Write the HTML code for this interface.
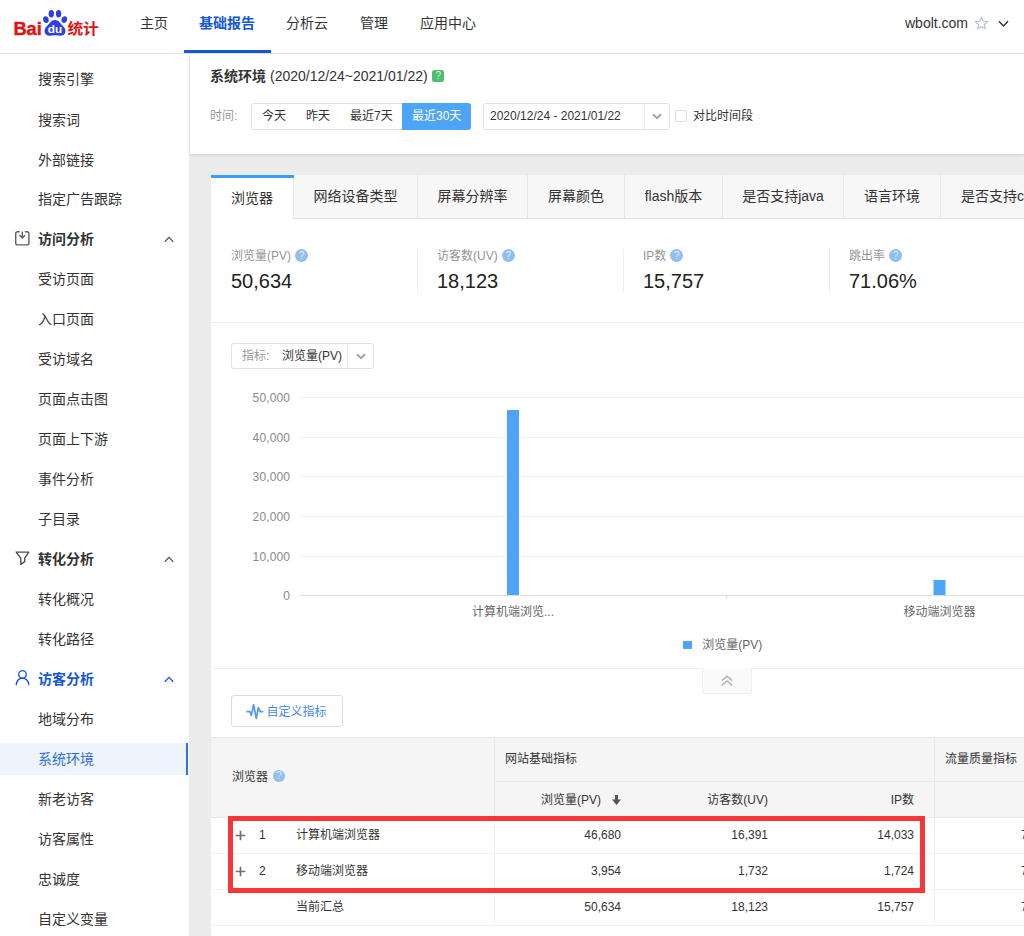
<!DOCTYPE html>
<html lang="zh-CN">
<head>
<meta charset="utf-8">
<title>百度统计 - 系统环境</title>
<style>
*{box-sizing:border-box;margin:0;padding:0}
html,body{width:1024px;height:936px;overflow:hidden;background:#ececec}
body{font-family:"Liberation Sans","Noto Sans CJK SC",sans-serif;font-size:12px;color:#333;position:relative}
.abs{position:absolute}
/* header */
#hdr{position:absolute;left:0;top:0;width:1024px;height:54px;background:#fff;border-bottom:1px solid #e1e5e9}
#hdr .nav{position:absolute;top:0;height:53px;line-height:47px;font-size:14px;color:#333;white-space:nowrap}
#hdr .nav.on{color:#1557d6;font-weight:bold}
#hdr .ul{position:absolute;left:184px;top:50px;width:87px;height:3px;background:#1557d6}
/* sidebar */
#side{position:absolute;left:0;top:54px;width:189px;height:882px;background:#fff}
#side .it{position:absolute;left:0;width:188px;height:40px;line-height:40px;padding-left:38px;font-size:14px;color:#333;white-space:nowrap}
#side .it.g{font-weight:bold}
#side .it.b{color:#1557d6}
#side .it.on{color:#2f6de0;background:linear-gradient(#eef4fe,#eef4fe) 0 4px/188px 32px no-repeat}
#side .it.on:after{content:"";position:absolute;right:0;top:4px;width:2px;height:32px;background:#3271dc}
/* main */
#top{position:absolute;left:189px;top:54px;width:835px;height:100px;background:#fff;border-left:1px solid #e6e8eb;box-shadow:0 1px 3px rgba(0,0,0,.12)}
#card{position:absolute;left:211px;top:175px;width:813px;height:761px;background:#fff}

/* top panel */
#top .ttl{position:absolute;left:20px;top:13px;height:18px;line-height:18px;font-size:14px;color:#333;white-space:nowrap}
#top .ttl b{font-weight:bold}
#top .qg{position:absolute;left:242.4px;top:16px;width:12px;height:12px;border-radius:2.5px;background:#4cbe6d;color:rgba(255,255,255,.8);font-size:10px;line-height:12px;text-align:center;font-weight:normal}
#top .lbl{position:absolute;left:20px;top:49px;height:26px;line-height:26px;color:#999;font-size:12px}
#top .grp{position:absolute;left:61px;top:49px;height:27px;width:220px;border:1px solid #e2e2e2;border-radius:3px;background:#fff}
#top .grp span{position:absolute;top:-1px;height:27px;line-height:26px;font-size:12px;color:#333;white-space:nowrap}
#top .grp span.on{background:#4da4f8;color:#fff;padding:0 10px;border-radius:0 3px 3px 0}
#top .date{position:absolute;left:293px;top:49px;width:187px;height:27px;border:1px solid #e2e2e2;border-radius:3px;line-height:25px;padding-left:6px;font-size:12px;color:#333;white-space:nowrap}
#top .date i{position:absolute;left:160px;top:0;width:1px;height:25px;background:#e8e8e8}
#top .cb{position:absolute;left:485px;top:56px;width:12px;height:12px;border:1px solid #dcdcdc;border-radius:2px;background:#fff}
#top .cbl{position:absolute;left:503px;top:49px;height:26px;line-height:26px;font-size:12px;color:#333;white-space:nowrap}

/* card */
#tabs{position:absolute;left:0;top:0;width:813px;height:44px;background:#f7f7f7;box-shadow:inset 0 -1px 0 #e6e6e6;overflow:hidden;white-space:nowrap}
#tabs .t{position:absolute;top:0;height:43px;line-height:43px;font-size:14px;color:#333;border-right:1px solid #e6e6e6;text-align:center;white-space:nowrap}
#tabs .t.on{background:#fff;height:44px;line-height:46px;border-left:0}
#tabs .t.on:before{content:"";position:absolute;left:0;top:0;width:83px;height:3px;background:#3f9cf6}
.m{position:absolute;top:72px;width:206px;height:50px}
.m .k{position:absolute;left:20px;top:1px;height:16px;line-height:16px;font-size:12px;color:#949494;white-space:nowrap}
.m .v{position:absolute;left:20px;top:22px;height:24px;line-height:24px;font-size:20px;color:#222;white-space:nowrap}
.m .d{position:absolute;left:0;top:2px;width:1px;height:44px;background:#eee}
.hq{display:inline-block;width:12px;height:12px;border-radius:7px;background:#92bdf1;color:rgba(255,255,255,.8);font-size:10px;line-height:12px;text-align:center;font-weight:normal;vertical-align:top;margin:2px 0 0 5px}
.m .hq{width:13px;height:13px;line-height:13px;margin:1px 0 0 4px}
.hl{position:absolute;left:0;width:813px;height:1px;background:#eee}

/* chart */
#sel{position:absolute;left:20px;top:168px;width:143px;height:26px;border:1px solid #e2e2e2;border-radius:3px;background:#fff;font-size:12px;line-height:24px;white-space:nowrap}
#sel .a{position:absolute;left:10px;top:0;color:#999;font-size:12px}
#sel .b{position:absolute;left:50px;top:0;color:#333}
#sel i{position:absolute;left:115px;top:0;width:1px;height:24px;background:#e6e6e6}
#chart{position:absolute;left:0;top:200px}
#chart text{font-family:"Liberation Sans","Noto Sans CJK SC",sans-serif;font-size:12px}
#fold{position:absolute;left:491px;top:493px;width:50px;height:26px;background:#fafafa;border:1px solid #f0f0f0;border-top:0;border-radius:0 0 3px 3px}
#cust{position:absolute;left:20px;top:520px;width:112px;height:32px;border:1px solid #ddd;border-radius:3px;background:#fff}
#cust span{position:absolute;left:34.6px;top:1px;line-height:31px;font-size:12px;color:#4189e8;white-space:nowrap}

/* table */
#tb{position:absolute;left:0;top:562px;width:813px;height:199px;font-size:12px;color:#333}
#tb .hd{position:absolute;left:0;top:0;width:813px;height:81px;background:#f5f5f5;border-top:1px solid #e8e8e8;border-bottom:1px solid #e8e8e8}
#tb .vl{position:absolute;width:1px;background:#e8e8e8}
#tb .x{position:absolute;height:20px;line-height:20px;white-space:nowrap}
#tb .r{text-align:right}
#tb .rl{position:absolute;left:0;width:813px;height:1px;background:#f1f1f1}
#red{position:absolute;left:17px;top:641px;width:697px;height:76.5px;border:5px solid #f83636}

#logo{position:absolute;left:0;top:0}
#logo text{font-family:"Liberation Sans","Noto Sans CJK SC",sans-serif;font-weight:bold}
.sic{position:absolute;left:14px}
.chev{position:absolute;left:164px}
</style>
</head>
<body>
<div id="hdr">
  <svg id="logo" width="110" height="53" viewBox="0 0 110 53">
    <text x="13.4" y="35.3" font-size="18.6" fill="#e01414" stroke="#e01414" stroke-width="0.45" textLength="28.4" lengthAdjust="spacingAndGlyphs">Bai</text>
    <g fill="#3040e0">
      <ellipse cx="45.9" cy="19.7" rx="2.8" ry="3.4" transform="rotate(-12 45.9 19.7)"/>
      <ellipse cx="51.3" cy="13.8" rx="2.7" ry="3.7"/>
      <ellipse cx="58.6" cy="13.8" rx="2.7" ry="3.7"/>
      <ellipse cx="64.3" cy="19.7" rx="2.8" ry="3.4" transform="rotate(12 64.3 19.7)"/>
      <path d="M55 20 C58.5 20 60 23 62.5 25.5 C65 28 66 30 65.3 32.6 C64.6 35.4 62 36 59.5 35.8 C57.5 35.6 56.5 35.3 55 35.3 C53.5 35.3 52.5 35.6 50.5 35.8 C48 36 45.4 35.4 44.7 32.6 C44 30 45 28 47.5 25.5 C50 23 51.5 20 55 20 Z"/>
    </g>
    <text x="47.8" y="33.2" font-size="11.4" fill="#fff" textLength="14.4" lengthAdjust="spacingAndGlyphs">du</text>
    <text x="67.4" y="34.2" font-size="14.6" fill="#e01414" textLength="31.4" lengthAdjust="spacingAndGlyphs">统计</text>
  </svg>
  <div class="nav" style="left:140px">主页</div>
  <div class="nav on" style="left:199px">基础报告</div>
  <div class="nav" style="left:286px">分析云</div>
  <div class="nav" style="left:360px">管理</div>
  <div class="nav" style="left:420px">应用中心</div>
  <div class="ul"></div>
  <div class="nav" style="left:905px">wbolt.com</div>
  <svg style="position:absolute;left:974px;top:16px" width="15" height="14" viewBox="0 0 15 14"><path d="M7.5 1.2 L9.3 5.2 L13.7 5.6 L10.4 8.5 L11.4 12.8 L7.5 10.5 L3.6 12.8 L4.6 8.5 L1.3 5.6 L5.7 5.2 Z" fill="none" stroke="#b4bfdd" stroke-width="1.15" stroke-linejoin="round"/></svg>
  <svg style="position:absolute;left:998px;top:20px" width="11" height="8" viewBox="0 0 11 8"><path d="M1 1.3 L5.5 6 L10 1.3" fill="none" stroke="#333" stroke-width="1.5"/></svg>
</div>
<div id="side">
  <svg class="sic" style="top:176px" width="17" height="17" viewBox="0 0 17 17"><path d="M5.2 1.7 H3.6 Q1.7 1.7 1.7 3.6 V13 Q1.7 14.9 3.6 14.9 H13 Q14.9 14.9 14.9 13 V3.6 Q14.9 1.7 13 1.7 H11.4 M8.3 1.9 V7.6 M5.9 5.5 L8.3 7.9 L10.7 5.5" fill="none" stroke="#5b606b" stroke-width="1.4" stroke-linecap="round" stroke-linejoin="round"/></svg>
  <svg class="sic" style="top:496px" width="17" height="17" viewBox="0 0 17 17"><path d="M2.2 2.1 H14.8 L10.7 8.2 V11.7 L6.8 14.4 V8.2 Z" fill="none" stroke="#4a4f5a" stroke-width="1.4" stroke-linejoin="round"/></svg>
  <svg class="sic" style="top:614px" width="17" height="19" viewBox="0 0 17 19"><circle cx="8.5" cy="6.4" r="3.75" fill="none" stroke="#1557d6" stroke-width="1.4"/><path d="M2.3 16.6 A6.2 6.5 0 0 1 14.7 16.6" fill="none" stroke="#1557d6" stroke-width="1.4" stroke-linecap="round"/></svg>
  <svg class="chev" style="top:182px" width="10" height="7" viewBox="0 0 10 7"><path d="M0.8 5.8 L5 1.4 L9.2 5.8" fill="none" stroke="#555" stroke-width="1.3"/></svg>
  <svg class="chev" style="top:502px" width="10" height="7" viewBox="0 0 10 7"><path d="M0.8 5.8 L5 1.4 L9.2 5.8" fill="none" stroke="#555" stroke-width="1.3"/></svg>
  <svg class="chev" style="top:622px" width="10" height="7" viewBox="0 0 10 7"><path d="M0.8 5.8 L5 1.4 L9.2 5.8" fill="none" stroke="#1557d6" stroke-width="1.3"/></svg>
  <div class="it" style="top:5px">搜索引擎</div>
  <div class="it" style="top:46px">搜索词</div>
  <div class="it" style="top:86px">外部链接</div>
  <div class="it" style="top:125px">指定广告跟踪</div>
  <div class="it g" style="top:165px">访问分析</div>
  <div class="it" style="top:205px">受访页面</div>
  <div class="it" style="top:245px">入口页面</div>
  <div class="it" style="top:285px">受访域名</div>
  <div class="it" style="top:325px">页面点击图</div>
  <div class="it" style="top:365px">页面上下游</div>
  <div class="it" style="top:405px">事件分析</div>
  <div class="it" style="top:445px">子目录</div>
  <div class="it g" style="top:485px">转化分析</div>
  <div class="it" style="top:525px">转化概况</div>
  <div class="it" style="top:565px">转化路径</div>
  <div class="it g b" style="top:605px">访客分析</div>
  <div class="it" style="top:645px">地域分布</div>
  <div class="it on" style="top:685px">系统环境</div>
  <div class="it" style="top:725px">新老访客</div>
  <div class="it" style="top:765px">访客属性</div>
  <div class="it" style="top:805px">忠诚度</div>
  <div class="it" style="top:845px">自定义变量</div>
</div>
<div id="top">
  <div class="ttl"><b>系统环境</b><span style="margin-left:4px">(2020/12/24~2021/01/22)</span></div>
  <div class="qg">?</div>
  <div class="lbl">时间:</div>
  <div class="grp">
    <span style="left:10px">今天</span>
    <span style="left:54px">昨天</span>
    <span style="left:98px">最近7天</span>
    <span class="on" style="left:150px">最近30天</span>
  </div>
  <div class="date">2020/12/24 - 2021/01/22<i></i>
    <svg style="position:absolute;left:168px;top:9px" width="10" height="7" viewBox="0 0 10 7"><path d="M1 1.2 L5 5.2 L9 1.2" fill="none" stroke="#a3a3a3" stroke-width="2"/></svg>
  </div>
  <div class="cb"></div>
  <div class="cbl">对比时间段</div>
</div>
<div id="card">
  <div id="tabs">
    <div class="t on" style="left:0;width:83px">浏览器</div>
    <div class="t" style="left:83px;width:124px">网络设备类型</div>
    <div class="t" style="left:207px;width:110px">屏幕分辨率</div>
    <div class="t" style="left:317px;width:97px">屏幕颜色</div>
    <div class="t" style="left:414px;width:98px">flash版本</div>
    <div class="t" style="left:512px;width:121px">是否支持java</div>
    <div class="t" style="left:633px;width:97px">语言环境</div>
    <div class="t" style="left:730px;width:130px;text-align:left;padding-left:20px">是否支持cookie</div>
  </div>
  <div class="m" style="left:0"><div class="k">浏览量(PV)<span class="hq">?</span></div><div class="v">50,634</div></div>
  <div class="m" style="left:206px"><i class="d"></i><div class="k">访客数(UV)<span class="hq">?</span></div><div class="v">18,123</div></div>
  <div class="m" style="left:412px"><i class="d"></i><div class="k">IP数<span class="hq">?</span></div><div class="v">15,757</div></div>
  <div class="m" style="left:618px"><i class="d"></i><div class="k">跳出率<span class="hq">?</span></div><div class="v">71.06%</div></div>
  <div class="hl" style="top:147px"></div>
  <div id="sel"><span class="a">指标:</span><span class="b">浏览量(PV)</span><i></i>
    <svg style="position:absolute;left:123.5px;top:9px" width="10" height="7" viewBox="0 0 10 7"><path d="M1 1.2 L5 5.2 L9 1.2" fill="none" stroke="#a3a3a3" stroke-width="2"/></svg>
  </div>
  <svg id="chart" width="813" height="290" viewBox="0 0 813 290">
    <g stroke="#f0f0f0" stroke-width="1" shape-rendering="crispEdges">
      <line x1="89" x2="813" y1="22.5" y2="22.5"/>
      <line x1="89" x2="813" y1="62.5" y2="62.5"/>
      <line x1="89" x2="813" y1="101.5" y2="101.5"/>
      <line x1="89" x2="813" y1="141.5" y2="141.5"/>
      <line x1="89" x2="813" y1="181.5" y2="181.5"/>
    </g>
    <g stroke="#dcdcdc" stroke-width="1" shape-rendering="crispEdges">
      <line x1="89" x2="813" y1="220.5" y2="220.5"/>
      <line x1="515.5" x2="515.5" y1="220" y2="224"/>
    </g>
    <g fill="#888" text-anchor="end">
      <text x="79" y="27" textLength="37.4">50,000</text>
      <text x="79" y="67" textLength="37.4">40,000</text>
      <text x="79" y="106" textLength="37.4">30,000</text>
      <text x="79" y="146" textLength="37.4">20,000</text>
      <text x="79" y="186" textLength="37.4">10,000</text>
      <text x="79" y="225">0</text>
    </g>
    <rect x="296" y="35" width="12" height="185" fill="#4da4f8"/>
    <rect x="722.5" y="205" width="12" height="15" fill="#4da4f8"/>
    <g fill="#666" text-anchor="middle">
      <text x="302" y="241">计算机端浏览...</text>
      <text x="728.5" y="241">移动端浏览器</text>
    </g>
    <rect x="472" y="266" width="9" height="8" fill="#4da4f8"/>
    <text x="491.3" y="274.4" fill="#666">浏览量(PV)</text>
  </svg>
  <div class="hl" style="top:493px"></div>
  <div id="fold"><svg style="position:absolute;left:18px;top:7px" width="12" height="12" viewBox="0 0 12 12"><path d="M0.8 5.6 L6 1.2 L11.2 5.6 M0.8 10.4 L6 6 L11.2 10.4" fill="none" stroke="#b2b2b2" stroke-width="1.4"/></svg></div>
  <div id="cust"><svg style="position:absolute;left:14px;top:7px" width="18" height="17" viewBox="0 0 18 17"><path d="M1 8.6 H3.9 L5.4 12.4 L7.6 1.6 L10.25 15.3 L12.4 4.5 L14.2 8.6 H16.7" fill="none" stroke="#5598ee" stroke-width="1.7" stroke-linejoin="round" stroke-linecap="round"/></svg><span>自定义指标</span></div>

  <div id="tb">
    <div class="hd"></div>
    <div class="vl" style="left:283px;top:1px;height:80px"></div><div class="vl" style="left:283px;top:81px;height:108px;background:#f0f0f0"></div>
    <div class="vl" style="left:723px;top:1px;height:80px"></div><div class="vl" style="left:723px;top:81px;height:108px;background:#f0f0f0"></div>
    <div class="rl" style="left:283px;width:530px;top:44px;background:#e8e8e8"></div>
    <div class="x" style="left:21px;top:30px">浏览器<span class="hq" style="margin-top:3px">?</span></div>
    <div class="x" style="left:294px;top:12px">网站基础指标</div>
    <div class="x" style="left:734px;top:12px">流量质量指标</div>
    <div class="x r" style="left:290px;width:100px;top:53px">浏览量(PV)</div>
    <svg style="position:absolute;left:401px;top:58px" width="9" height="10" viewBox="0 0 9 10"><path d="M3 0 H6 V4.5 H9 L4.5 10 L0 4.5 H3 Z" fill="#555"/></svg>
    <div class="x r" style="left:457px;width:100px;top:53px">访客数(UV)</div>
    <div class="x r" style="left:603px;width:100px;top:53px">IP数</div>
    <svg style="position:absolute;left:23.8px;top:93.1px" width="11" height="11" viewBox="0 0 11 11"><path d="M0.7 5.5 H10.3 M5.5 0.7 V10.3" fill="none" stroke="#707070" stroke-width="1.7"/></svg><div class="x" style="left:48px;top:88px">1</div><div class="x" style="left:85px;top:88px">计算机端浏览器</div><div class="x r" style="left:310px;width:100px;top:88px">46,680</div><div class="x r" style="left:457px;width:100px;top:88px">16,391</div><div class="x r" style="left:603px;width:100px;top:88px">14,033</div><div class="x" style="left:810px;top:88px">70.52%</div>
    <div class="rl" style="top:116px"></div>
    <svg style="position:absolute;left:23.8px;top:129.2px" width="11" height="11" viewBox="0 0 11 11"><path d="M0.7 5.5 H10.3 M5.5 0.7 V10.3" fill="none" stroke="#707070" stroke-width="1.7"/></svg><div class="x" style="left:48px;top:124px">2</div><div class="x" style="left:85px;top:124px">移动端浏览器</div><div class="x r" style="left:310px;width:100px;top:124px">3,954</div><div class="x r" style="left:457px;width:100px;top:124px">1,732</div><div class="x r" style="left:603px;width:100px;top:124px">1,724</div><div class="x" style="left:810px;top:124px">77.45%</div>
    <div class="rl" style="top:152px"></div>
    <div class="x" style="left:85px;top:160px">当前汇总</div><div class="x r" style="left:310px;width:100px;top:160px">50,634</div><div class="x r" style="left:457px;width:100px;top:160px">18,123</div><div class="x r" style="left:603px;width:100px;top:160px">15,757</div><div class="x" style="left:810px;top:160px">71.06%</div>
    <div class="rl" style="top:188px"></div>
  </div>
  <div id="red"></div>

</div>
</body>
</html>
